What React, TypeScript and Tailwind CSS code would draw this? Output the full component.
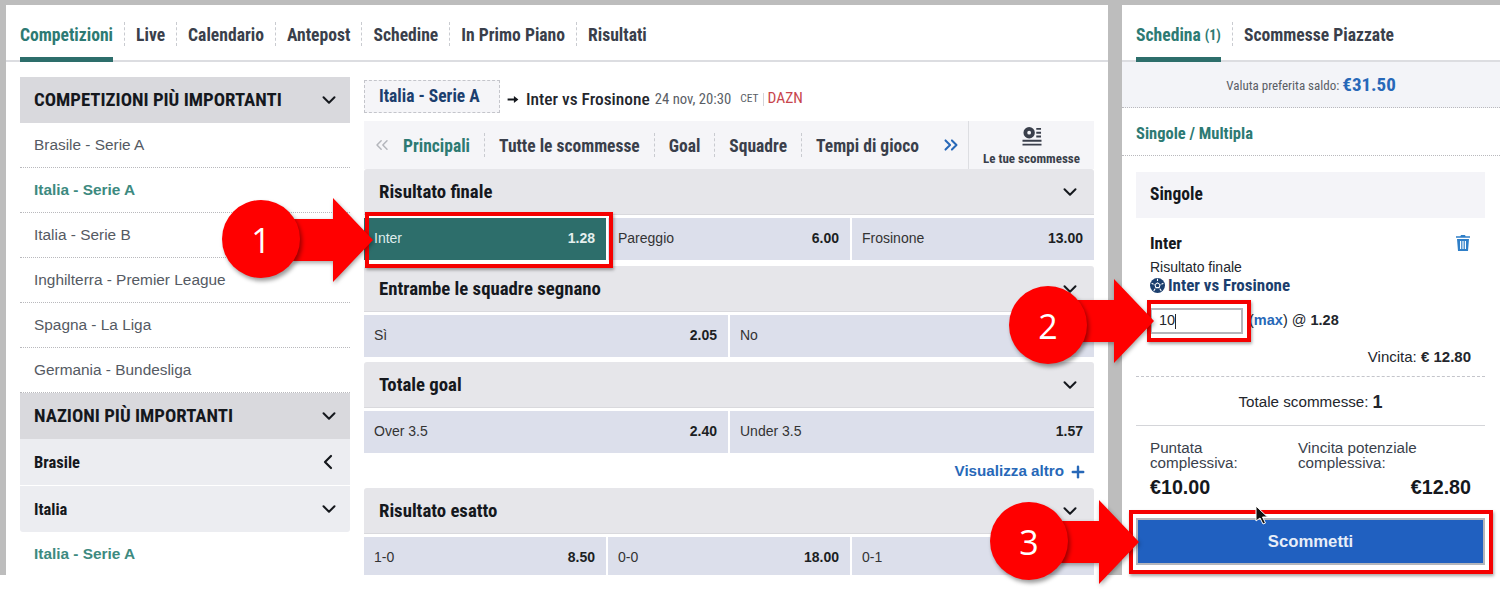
import { ChevronDown, ChevronLeft, ChevronsLeft, ChevronsRight, Plus } from "lucide-react";

const COND = "font-['Roboto',sans-serif] [font-stretch:75%]";
const ARIAL = "font-['Liberation_Sans',sans-serif]";

const TABS = ["Competizioni", "Live", "Calendario", "Antepost", "Schedine", "In Primo Piano", "Risultati"];
const COMPETITIONS = ["Brasile - Serie A", "Italia - Serie A", "Italia - Serie B", "Inghilterra - Premier League", "Spagna - La Liga", "Germania - Bundesliga"];

type Odd = { label: string; value: string; active?: boolean };

const MARKETS: { title: string; after: string; odds: Odd[] }[] = [
  {
    title: "Risultato finale",
    after: "mb-[6px]",
    odds: [
      { label: "Inter", value: "1.28", active: true },
      { label: "Pareggio", value: "6.00" },
      { label: "Frosinone", value: "13.00" },
    ],
  },
  {
    title: "Entrambe le squadre segnano",
    after: "mb-[5px]",
    odds: [
      { label: "Sì", value: "2.05" },
      { label: "No", value: "1.70" },
    ],
  },
  {
    title: "Totale goal",
    after: "",
    odds: [
      { label: "Over 3.5", value: "2.40" },
      { label: "Under 3.5", value: "1.57" },
    ],
  },
  {
    title: "Risultato esatto",
    after: "",
    odds: [
      { label: "1-0", value: "8.50" },
      { label: "0-0", value: "18.00" },
      { label: "0-1", value: "29.00" },
    ],
  },
];

function Market({ title, after, odds }: (typeof MARKETS)[number]) {
  return (
    <div className={after}>
      <div className="flex h-[46px] items-center justify-between rounded-t-[3px] border-b border-[#d9d9dd] bg-[#e6e6ea] pl-[15px] pr-[13px]">
        <span className={`${COND} pt-[2px] text-[18.800px] font-bold text-[#15181d]`}>{title}</span>
        <ChevronDown className="h-[22px] w-[22px] text-[#15181d]" strokeWidth={2.2} />
      </div>
      <div className="mt-[3px] flex h-[42px] gap-[2px]">
        {odds.map((o) => (
          <OddCell key={o.label} {...o} />
        ))}
      </div>
    </div>
  );
}

function OddCell({ label, value, active }: Odd) {
  return (
    <div
      className={`flex flex-1 items-center justify-between pb-[2px] pl-[10px] pr-[11px] ${ARIAL} text-[14px] ${
        active ? "bg-[#2d6e6b] text-[#dfeceb]" : "bg-[#dcdfeb] text-[#333]"
      }`}
    >
      <span>{label}</span>
      <b className={active ? "text-[#e4efee]" : "text-[#1c1f24]"}>{value}</b>
    </div>
  );
}

function Sep() {
  return <span className="block h-[24px] border-l border-dashed border-[#c9cbd0]" />;
}

function MainTabs() {
  return (
    <div className="flex h-[57px] items-start border-b-2 border-[#dcdde1] pl-[14px]">
      {TABS.map((t, i) => (
        <div key={t} className="flex h-full items-start">
          {i > 0 && <span className="mx-[11px] mt-[17px] h-[24px] border-l border-dashed border-[#c9cbd0]" />}
          <span
            className={`${COND} flex h-[57px] items-center text-[17.600px] font-bold ${
              i === 0 ? "border-b-[5px] border-[#2d6e6b] pt-[8px] text-[#2d7a73]" : "pt-[3px] text-[#3a3f4b]"
            }`}
          >
            {t}
          </span>
        </div>
      ))}
    </div>
  );
}

function Sidebar() {
  return (
    <div className="w-[330px]">
      <SideHeader title="COMPETIZIONI PIÙ IMPORTANTI" />
      {COMPETITIONS.map((c, i) => (
        <div
          key={c}
          className={`flex h-[45px] items-center border-b border-dotted border-[#b9b9bd] pl-[14px] ${ARIAL} text-[15.400px] ${
            i === 1 ? "font-bold text-[#3d8a80]" : "text-[#555a63]"
          }`}
        >
          {c}
        </div>
      ))}
      <SideHeader title="NAZIONI PIÙ IMPORTANTI" />
      <div className="flex h-[46px] items-center justify-between bg-[#ecedf1] pl-[14px] pr-[10px]">
        <span className={`${COND} pt-[2px] text-[16.500px] font-bold text-[#15181d]`}>Brasile</span>
        <ChevronLeft className="h-[24px] w-[24px] text-[#15181d]" strokeWidth={2.2} />
      </div>
      <div className="mt-[1px] flex h-[46px] items-center justify-between rounded-b-[3px] bg-[#ecedf1] pl-[14px] pr-[10px]">
        <span className={`${COND} pt-[2px] text-[16.500px] font-bold text-[#15181d]`}>Italia</span>
        <ChevronDown className="h-[22px] w-[22px] text-[#15181d]" strokeWidth={2.2} />
      </div>
      <div className={`flex h-[44px] items-center pl-[14px] ${ARIAL} text-[15.400px] font-bold text-[#3d8a80]`}>Italia - Serie A</div>
    </div>
  );
}

function SideHeader({ title }: { title: string }) {
  return (
    <div className="flex h-[46px] items-center justify-between bg-[#d9d9dd] pl-[14px] pr-[10px]">
      <span className={`${COND} text-[18.800px] font-bold text-[#15181d]`}>{title}</span>
      <ChevronDown className="h-[22px] w-[22px] text-[#15181d]" strokeWidth={2.2} />
    </div>
  );
}

function YourBetsIcon() {
  return (
    <svg viewBox="0 0 20 20" className="h-[19px] w-[20px] text-[#3a3f4b]" fill="currentColor">
      <path fillRule="evenodd" d="M7 0a6 6 0 1 1 0 12A6 6 0 0 1 7 0zm0 4a2 2 0 1 0 0 4 2 2 0 0 0 0-4z" />
      <path d="M14.500 1h5v2h-5zM14.500 5h5v2h-5zM14.500 9h5v2h-5zM0 13.500h20v2H0zM0 17.500h20v2H0z" />
    </svg>
  );
}

function MarketNav() {
  const links = ["Tutte le scommesse", "Goal", "Squadre", "Tempi di gioco"];
  return (
    <div className="flex h-[48px] bg-[#f5f5f8]">
      <div className="flex flex-1 items-center pl-[8px]">
        <ChevronsLeft className="h-[20px] w-[20px] text-[#b4b6bc]" strokeWidth={1.800} />
        <span className={`${COND} ml-[11px] pt-[2px] text-[17.500px] font-bold text-[#2d7a73]`}>Principali</span>
        {links.map((l) => (
          <span key={l} className="flex items-center">
            <span className="mx-[14px]">
              <Sep />
            </span>
            <span className={`${COND} pt-[2px] text-[17.500px] font-bold text-[#3a3f4b]`}>{l}</span>
          </span>
        ))}
        <ChevronsRight className="ml-[21px] h-[22px] w-[22px] text-[#2768b8]" strokeWidth={2.200} />
      </div>
      <div className="flex w-[126px] flex-col items-center border-l border-[#dddee2] pt-[6px]">
        <YourBetsIcon />
        <span className={`${COND} mt-[3px] text-[13px] font-bold text-[#3a3f4b]`}>Le tue scommesse</span>
      </div>
    </div>
  );
}

function Center() {
  return (
    <div className="ml-[14px] w-[730px]">
      <div className="flex h-[44px] items-start">
        <div className={`mt-[3px] flex h-[33px] w-[136px] items-center border border-dashed border-[#c4c5cb] bg-[#f5f5f8] pl-[14px] ${COND} text-[17.500px] font-bold text-[#1c3f6e]`}>
          Italia - Serie A
        </div>
        <div className="ml-[7px] flex h-[44px] items-center">
          <svg viewBox="0 0 12 10" className="h-[9px] w-[12px] text-[#15181d]" fill="currentColor">
            <path d="M0 4h7V1l5 4-5 4V6H0z" />
          </svg>
          <span className={`${COND} ml-[7px] text-[17.400px] font-medium text-[#23262c]`}>Inter vs Frosinone</span>
          <span className={`${COND} ml-[5px] text-[14.700px] text-[#5a5e66]`}>24 nov, 20:30</span>
          <span className={`${COND} ml-[9px] text-[11.500px] text-[#5a5e66]`}>CET</span>
          <span className="mx-[4px] h-[13px] border-l border-[#d4d5d9]" />
          <span className={`${COND} text-[15.500px] text-[#c8454c]`}>DAZN</span>
        </div>
      </div>
      <MarketNav />
      {MARKETS.slice(0, 3).map((m) => (
        <Market key={m.title} {...m} />
      ))}
      <div className={`flex h-[35px] items-center justify-end gap-[5px] pr-[7px] pt-[2px] ${ARIAL} text-[15.200px] font-bold text-[#2768b8]`}>
        Visualizza altro
        <Plus className="h-[18px] w-[18px]" strokeWidth={3.200} />
      </div>
      <Market {...MARKETS[3]} />
    </div>
  );
}

function BallIcon() {
  return (
    <svg viewBox="0 0 14 14" className="h-[15px] w-[15px] text-[#1c3f6e]">
      <circle cx="7" cy="7" r="7" fill="currentColor" />
      <path d="M7 4.500l2.400 1.700-.9 2.800h-3l-.9-2.800zM7 .8v2M1.500 5l1.800.8M12.500 5l-1.800.8M3.500 12l1.300-2M10.500 12l-1.300-2" stroke="#fff" strokeWidth="1" fill="none" />
    </svg>
  );
}

function TrashIcon() {
  return (
    <svg viewBox="0 0 14 16" className="h-[16px] w-[14px] text-[#2f7fc8]" fill="currentColor">
      <path fillRule="evenodd" d="M5 0h4l.6 1.200H14v1.600H0V1.200h4.400zM1 4h12l-1 12H2zm3 2v8h1.200V6zm2.400 0v8h1.200V6zM8.800 6v8H10V6z" />
    </svg>
  );
}

function Slip() {
  return (
    <div className="flex-1 bg-white">
      <div className="flex h-[57px] items-start border-b-2 border-[#dcdde1] pl-[14px]">
        <span className={`${COND} flex h-[57px] items-center border-b-[5px] border-[#2d6e6b] pt-[8px] text-[17.600px] font-bold text-[#2d7a73]`}>
          Schedina<span className="ml-[4px] text-[14px]">(1)</span>
        </span>
        <span className="mx-[11px] mt-[17px] h-[24px] border-l border-dashed border-[#c9cbd0]" />
        <span className={`${COND} flex h-[57px] items-center pt-[3px] text-[17.600px] font-bold text-[#3a3f4b]`}>Scommesse Piazzate</span>
      </div>
      <div className="flex h-[46px] items-center justify-center gap-[3px] border-b border-dotted border-[#b9b9bd] bg-[#f3f4f8] pt-[2px]">
        <span className={`${COND} text-[13px] text-[#5a5e66]`}>Valuta preferita saldo:</span>
        <b className={`${COND} text-[19px] text-[#2768b8]`}>€31.50</b>
      </div>
      <div className={`flex h-[48px] items-center border-b border-dotted border-[#b9b9bd] pl-[14px] pt-[6px] ${COND} text-[16.500px] font-bold text-[#2d7a73]`}>
        Singole / Multipla
      </div>
      <div className="mx-[14px] mt-[16px] w-[349px]">
        <div className={`flex h-[46px] items-center bg-[#f4f4f8] pb-[2px] pl-[14px] ${COND} text-[17.500px] font-bold text-[#15181d]`}>Singole</div>
        <div className="px-[14px] pt-[15px]">
          <div className="flex items-center justify-between pr-[1px]">
            <span className={`${COND} text-[17px] font-bold leading-[20px] text-[#15181d]`}>Inter</span>
            <TrashIcon />
          </div>
          <div className={`mt-[5px] ${ARIAL} text-[14px] leading-[18px] text-[#23262c]`}>Risultato finale</div>
          <div className={`flex items-center gap-[3px] ${COND} text-[17px] font-bold leading-[18px] text-[#1c3f6e]`}>
            <BallIcon />
            Inter vs Frosinone
          </div>
          <div className={`mt-[14px] flex h-[26px] items-center ${ARIAL} text-[14.500px] text-[#23262c]`}>
            <div className="flex h-[26px] w-[93px] items-center border-2 border-[#b4b6bc] bg-white pl-[7px]">
              10<span className="h-[15px] border-l border-[#23262c]" />
            </div>
            <span className="ml-[6px]">
              (<b className="text-[#2768b8]">max</b>) @ <b>1.28</b>
            </span>
          </div>
          <div className={`mt-[14px] text-right ${ARIAL} text-[15px] leading-[18px] text-[#23262c]`}>
            Vincita: <b>€ 12.80</b>
          </div>
        </div>
        <div className="mt-[10px] border-b border-dashed border-[#c4c5cb]" />
        <div className={`flex h-[49px] items-center justify-center gap-[4px] border-b border-[#d4d5d9] pt-[3px] ${ARIAL} text-[15.200px] text-[#23262c]`}>
          Totale scommesse: <b className="text-[18px]">1</b>
        </div>
        <div className={`mt-[14px] flex px-[14px] ${ARIAL} text-[15.200px] leading-[15px] text-[#3a3f4b]`}>
          <div className="w-[148px]">
            Puntata
            <br />
            complessiva:
          </div>
          <div>
            Vincita potenziale
            <br />
            complessiva:
          </div>
        </div>
        <div className={`mt-[6px] flex h-[24px] items-center justify-between px-[14px] ${ARIAL} text-[19.700px] font-bold text-[#15181d]`}>
          <span>€10.00</span>
          <span>€12.80</span>
        </div>
        <div className={`mt-[18px] flex h-[47px] items-center justify-center border-2 border-[#b4b6bc] bg-[#2060c0] ${ARIAL} text-[16.700px] font-bold text-[#e8eef8]`}>
          Scommetti
        </div>
      </div>
    </div>
  );
}

// numbered callouts drawn over the screenshot: circle, arrow and red frame
function Callout({ n, circle, arrow, frame }: { n: string; circle: string; arrow: string; frame: string }) {
  return (
    <>
      <div className={`absolute border-[4px] border-[#f50000] shadow-[1px_2px_3px_rgba(0,0,0,0.35)] ${frame}`} />
      <svg className={`absolute h-[84px] w-[80px] drop-shadow-[1px_2px_2px_rgba(0,0,0,0.35)] ${arrow}`} viewBox="0 0 80 84">
        <path d="M0 21h40V0l40 42-40 42V63H0z" fill="#ff0000" />
      </svg>
      <div className={`absolute flex h-[78px] w-[78px] items-center justify-center rounded-full bg-[#ff0000] pt-[2px] font-['Open_Sans',sans-serif] text-[34px] text-white shadow-[2px_3px_4px_rgba(0,0,0,0.4)] ${circle}`}>
        {n}
      </div>
    </>
  );
}

export default function App() {
  return (
    <div className="relative h-[594px] w-[1500px] overflow-hidden bg-white">
      <div className="flex h-[575px] overflow-hidden bg-[#bdbdbd] pl-[6px] pt-[5px]">
        <div className="h-[570px] w-[1102px] overflow-hidden bg-white">
          <MainTabs />
          <div className="flex pl-[14px] pt-[15px]">
            <Sidebar />
            <Center />
          </div>
        </div>
        <div className="ml-[14px] flex h-[570px] flex-1 overflow-hidden bg-white">
          <Slip />
        </div>
      </div>

      <Callout n="1" circle="left-[222px] top-[200px]" arrow="left-[293px] top-[198px]" frame="left-[365px] top-[212px] h-[56px] w-[248px]" />
      <Callout n="2" circle="left-[1009px] top-[286px]" arrow="left-[1074px] top-[279px]" frame="left-[1147px] top-[300px] h-[42px] w-[104px]" />
      <Callout n="3" circle="left-[990px] top-[502px]" arrow="left-[1059px] top-[500px]" frame="left-[1129px] top-[510px] h-[64px] w-[364px]" />

      <svg className="absolute left-[1255px] top-[505px] h-[20px] w-[14px]" viewBox="0 0 14 20">
        <path d="M1 1v15l4-3 3 6 2.500-1-3-6h5z" fill="#111" stroke="#fff" strokeWidth="1" />
      </svg>
    </div>
  );
}
